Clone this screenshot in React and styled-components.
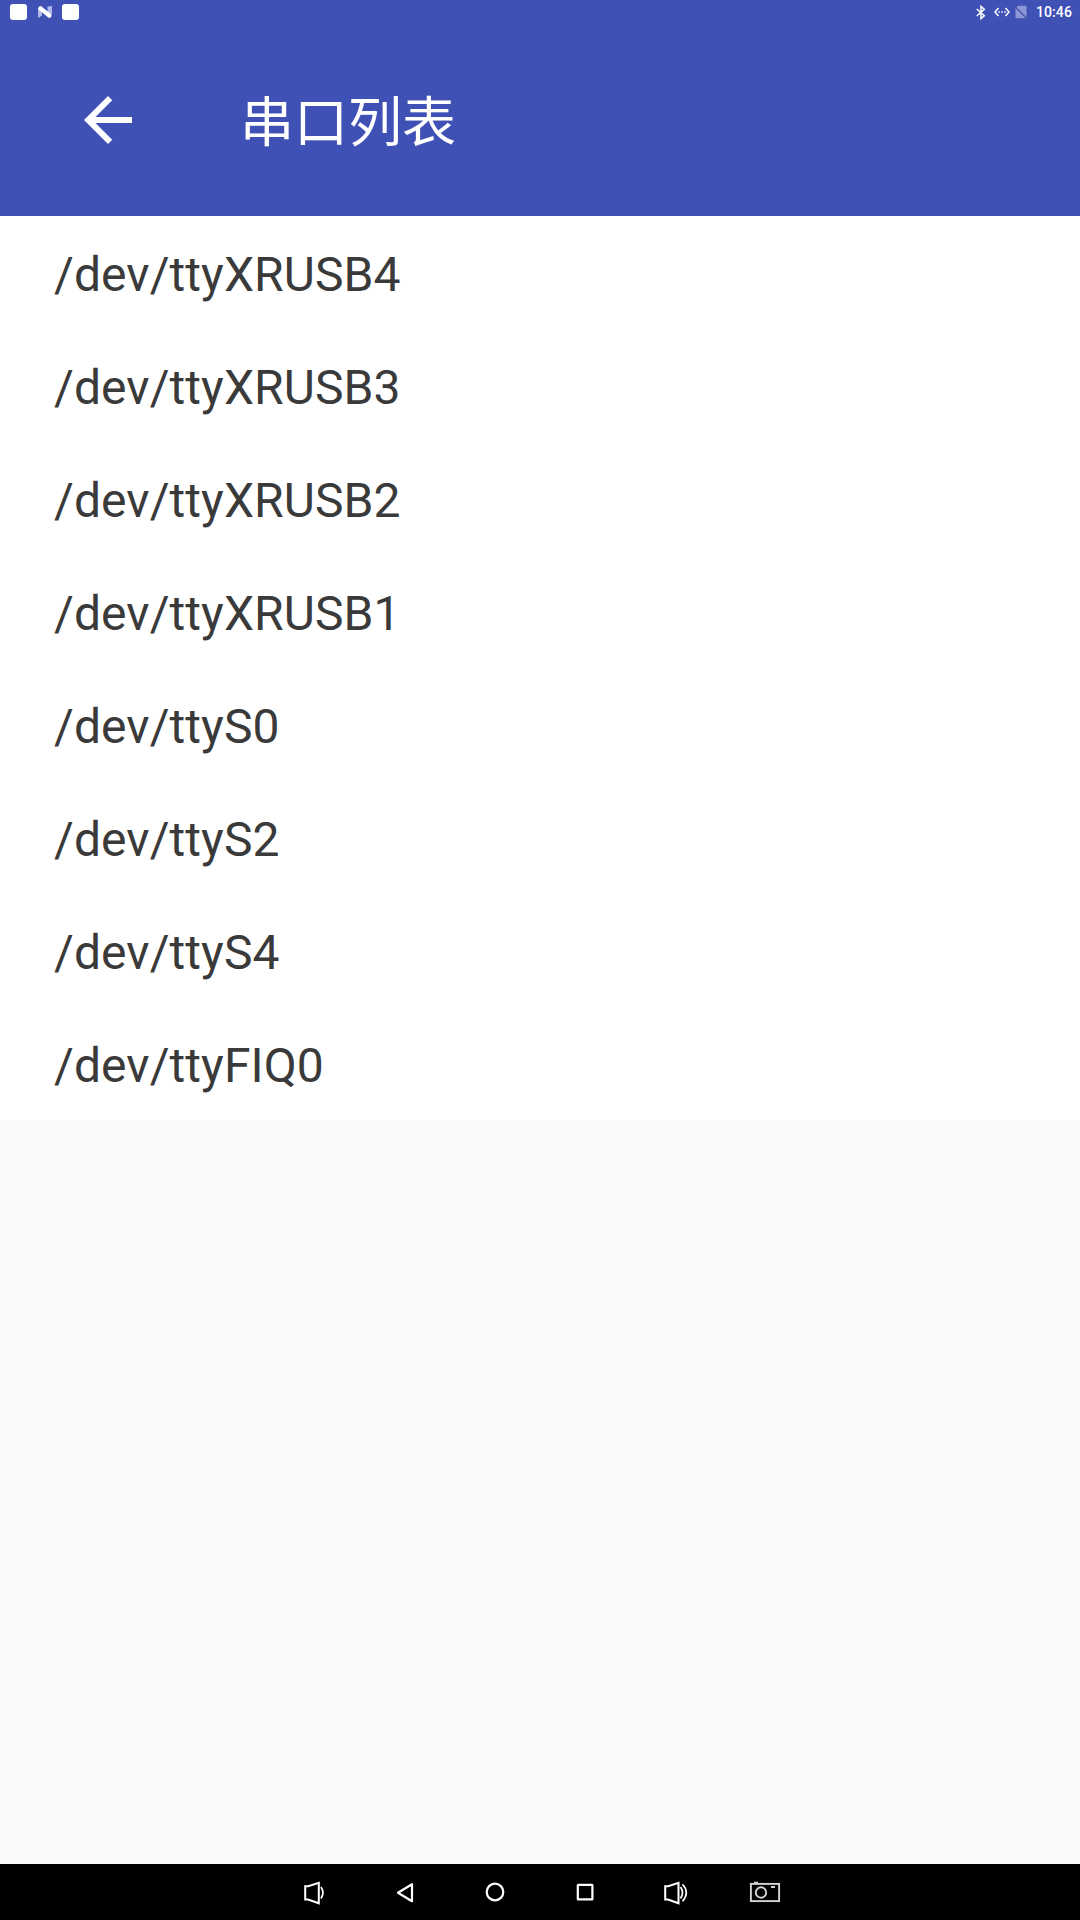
import React from "react";
import styled, { createGlobalStyle } from "styled-components";

const GlobalStyle = createGlobalStyle`
  *, *::before, *::after { box-sizing: border-box; }
  html, body { margin: 0; padding: 0; background: #fafafa; }
  svg { display: block; flex: none; }
`;

const Screen = styled.div`
  display: flex;
  flex-direction: column;
  width: 1080px;
  height: 1920px;
  overflow: hidden;
  background: #fafafa;
  font-family: Roboto, "Noto Sans CJK SC", sans-serif;
`;

const StatusBar = styled.header`
  display: flex;
  align-items: center;
  justify-content: space-between;
  height: 24px;
  padding: 0 8px 0 10px;
  background: #3f51b5;
  color: #fff;
`;

const StatusGroup = styled.div`
  display: flex;
  align-items: center;
  gap: ${(p) => p.$gap}px;
`;

const NotificationDot = styled.span`
  width: 17px;
  height: 16px;
  border-radius: 3px;
  background: #fff;
`;

const Clock = styled.time`
  margin-left: 4px;
  font-size: 14px;
  font-weight: 500;
  line-height: 24px;
  letter-spacing: 0.1px;
`;

const Toolbar = styled.div`
  display: flex;
  align-items: center;
  gap: 96px;
  height: 192px;
  padding: 0 72px;
  background: #3f51b5;
  color: #fff;
`;

const BackButton = styled.button`
  display: flex;
  padding: 0;
  border: 0;
  background: none;
  color: inherit;
`;

const Title = styled.h1`
  margin: 0;
  padding-bottom: 2px;
  font-family: "Noto Sans CJK SC", sans-serif;
  font-size: 54px;
  font-weight: 400;
  line-height: 72px;
`;

const PortList = styled.ul`
  margin: 0;
  padding: 0;
  list-style: none;
  background: #fff;
`;

const PortItem = styled.li`
  display: flex;
  align-items: center;
  height: 113px;
  padding: 4px 54px 0;
  color: #3a3a3a;
  font-size: 48px;
  line-height: 56px;
  letter-spacing: 0.09px;
`;

const NavBar = styled.nav`
  display: flex;
  justify-content: center;
  height: 56px;
  margin-top: auto;
  background: #000;
`;

const NavButton = styled.button`
  display: flex;
  align-items: center;
  justify-content: center;
  width: 90px;
  padding: 0;
  border: 0;
  background: none;
  color: #fff;
`;

const NavIcon = ({ children, width = 2.2 }) => (
  <svg width="36" height="36" viewBox="0 0 36 36" fill="none" stroke="currentColor" strokeWidth={width}>
    {children}
  </svg>
);

const NotifyN = () => (
  <svg width="15" height="14" viewBox="0 0 15 14">
    <path d="M1 2.500 5 5v5.500L1 13zM10.500 1.500 15 1v8l-4.500 3z" fill="#b0b9ea" />
    <path d="M3.500 3.300 12.300 10.700" stroke="#fff" strokeWidth="4.200" strokeLinecap="round" />
  </svg>
);

const Bluetooth = () => (
  <svg width="10" height="15" viewBox="0 0 10 15" fill="none" stroke="#fff" strokeWidth="1.500">
    <path d="M.8 4l7.500 6.700L5 13.600V1.400l3.300 2.900L.8 11" />
  </svg>
);

const Ethernet = () => (
  <svg width="16" height="10" viewBox="0 0 16 10">
    <path d="M4.500 1 1 5l3.500 4M11.500 1 15 5l-3.500 4" fill="none" stroke="#fff" strokeWidth="1.500" />
    <path d="M4.300 4.300h1.500v1.500H4.300zM7.250 4.300h1.500v1.500h-1.500zM10.200 4.300h1.500v1.500h-1.500z" fill="#fff" />
  </svg>
);

const NoSim = () => (
  <svg width="14" height="14" viewBox="0 0 14 14">
    <path d="M4 .8h8.500v12.400h-11V3.500z" fill="#8c97d3" />
    <path d="M.8 1.500 13.200 13.800" stroke="#4656ae" strokeWidth="1.400" />
  </svg>
);

const ArrowBack = () => (
  <svg width="72" height="72" viewBox="0 0 24 24" fill="currentColor">
    <path d="M20 11H7.830l5.590-5.590L12 4l-8 8 8 8 1.410-1.410L7.830 13H20v-2z" />
  </svg>
);

const StatusIcons = styled.div`
  display: flex;
  align-items: center;
  gap: ${(p) => p.$gap}px;
`;

const navButtons = [
  {
    label: "Volume down",
    icon: (
      <NavIcon width={2}>
        <path d="M8.200 12.300h3L21.800 8.800v20.500L11 25.500H8.200z" />
        <path d="M24 13q3.800 5.700 0 11.500" strokeWidth="1.700" />
      </NavIcon>
    ),
  },
  { label: "Back", icon: <NavIcon><path d="M25 10.200v17L11 18.700z" strokeLinejoin="round" /></NavIcon> },
  { label: "Home", icon: <NavIcon><circle cx="18" cy="18" r="8.300" /></NavIcon> },
  { label: "Recent apps", icon: <NavIcon><rect x="10.800" y="10.800" width="14.600" height="14.600" rx=".4" /></NavIcon> },
  {
    label: "Volume up",
    icon: (
      <NavIcon width={2}>
        <path d="M8.200 12.300h3L21.500 8.800v20.500L11 25.500H8.200z" />
        <path d="M23.500 13q4 5.700 0 11.500M25.500 10.300q7.500 8.200 0 17" strokeWidth="1.700" />
      </NavIcon>
    ),
  },
  {
    label: "Screenshot",
    icon: (
      <NavIcon width={1.9}>
        <g stroke="#d2d6d2">
          <rect x="3.900" y="9.900" width="28.200" height="17.200" />
          <circle cx="14" cy="18.500" r="5.200" />
          <path d="M7 8.700h4M24 13h4" />
        </g>
      </NavIcon>
    ),
  },
];

const ports = [
  "/dev/ttyXRUSB4",
  "/dev/ttyXRUSB3",
  "/dev/ttyXRUSB2",
  "/dev/ttyXRUSB1",
  "/dev/ttyS0",
  "/dev/ttyS2",
  "/dev/ttyS4",
  "/dev/ttyFIQ0",
];

export default function App() {
  return (
    <Screen>
      <GlobalStyle />
      <StatusBar>
        <StatusGroup $gap={10}>
          <NotificationDot />
          <NotifyN />
          <NotificationDot />
        </StatusGroup>
        <StatusGroup $gap={4}>
          <StatusIcons $gap={8}>
            <Bluetooth />
            <StatusIcons $gap={4}>
              <Ethernet />
              <NoSim />
            </StatusIcons>
          </StatusIcons>
          <Clock>10:46</Clock>
        </StatusGroup>
      </StatusBar>
      <Toolbar>
        <BackButton aria-label="Back">
          <ArrowBack />
        </BackButton>
        <Title>串口列表</Title>
      </Toolbar>
      <PortList>
        {ports.map((port) => (
          <PortItem key={port}>{port}</PortItem>
        ))}
      </PortList>
      <NavBar>
        {navButtons.map(({ label, icon }) => (
          <NavButton key={label} aria-label={label}>
            {icon}
          </NavButton>
        ))}
      </NavBar>
    </Screen>
  );
}
